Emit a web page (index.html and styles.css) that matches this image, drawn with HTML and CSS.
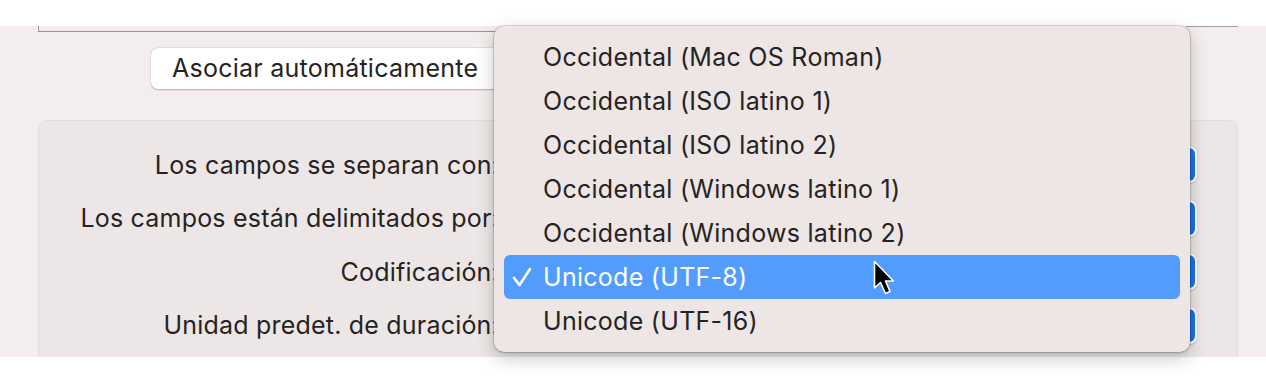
FILE: index.html
```html
<!DOCTYPE html>
<html lang="es">
<head>
<meta charset="utf-8">
<link rel="stylesheet" href="styles.css">
</head>
<body>
<div class="top-band"></div>
<div class="window">
  <div class="field-edge"><span class="field-right"></span></div>
  <div class="button-row">
    <button class="push">Asociar automáticamente</button>
  </div>
  <div class="group">
    <div class="row">
      <span class="label">Los campos se separan con:</span>
      <span class="popup"><span class="popup-arrow"></span></span>
    </div>
    <div class="row">
      <span class="label">Los campos están delimitados por:</span>
      <span class="popup"><span class="popup-arrow"></span></span>
    </div>
    <div class="row">
      <span class="label">Codificación:</span>
      <span class="popup"><span class="popup-arrow"></span></span>
    </div>
    <div class="row">
      <span class="label">Unidad predet. de duración:</span>
      <span class="popup"><span class="popup-arrow"></span></span>
    </div>
  </div>
</div>

<div class="menu">
  <div class="item">Occidental (Mac OS Roman)</div>
  <div class="item">Occidental (ISO latino 1)</div>
  <div class="item">Occidental (ISO latino 2)</div>
  <div class="item">Occidental (Windows latino 1)</div>
  <div class="item">Occidental (Windows latino 2)</div>
  <div class="item selected">
    <svg class="check" width="20" height="22" viewBox="0 0 20 22"><polyline points="2,12 7.5,19 18,3" fill="none" stroke="#fff" stroke-width="2.6" stroke-linecap="round" stroke-linejoin="round"/></svg>
    Unicode (UTF-8)
  </div>
  <div class="item">Unicode (UTF-16)</div>
</div>

<svg class="cursor" width="24" height="38" viewBox="0 0 24 38">
  <path d="M1.5 1.5 L1.5 28 L7.5 22.5 L12.5 33.5 L17 31.5 L12.5 21 L20.5 21 Z" fill="#000" stroke="#fff" stroke-width="1.6" stroke-linejoin="round"/>
</svg>
</body>
</html>
```

FILE: styles.css
```css
* { box-sizing: border-box; }
html, body {
  margin: 0;
  padding: 0;
}
body {
  width: 1266px;
  height: 390px;
  background: #ffffff;
  font-family: "Inter", "Liberation Sans", sans-serif;
  color: #262323;
  position: relative;
  overflow: hidden;
}
.top-band {
  height: 26px;
  background: #ffffff;
}
.window {
  height: 331px;
  background: #f3eeed;
  padding: 0 28px 0 38px;
  overflow: hidden;
}
.field-edge {
  height: 6px;
  border-left: 1px solid #9a9696;
  border-bottom: 1px solid #9a9696;
  position: relative;
}
.field-right {
  position: absolute;
  right: 0;
  top: 0;
  width: 52px;
  height: 7px;
  background: #f3eeed;
  border-top: 1px solid #a29e9e;
}
.button-row {
  margin-top: 16px;
  padding-left: 113px;
  height: 41px;
}
.push {
  height: 41px;
  width: 360px;
  border: none;
  border-radius: 7px;
  background: #ffffff;
  box-shadow: 0 0.5px 1.5px rgba(0,0,0,0.25), 0 0 0 0.5px rgba(0,0,0,0.06);
  font-family: inherit;
  font-size: 25px;
  letter-spacing: 0.25px;
  color: #262323;
  text-align: left;
  padding: 0 0 1px 21px;
  white-space: nowrap;
}
.group {
  margin-top: 31px;
  height: 260px;
  background: #ece7e6;
  border: 1px solid #e3dedd;
  border-radius: 9px;
  padding-top: 17px;
}
.row {
  display: grid;
  grid-template-columns: 460px 1fr;
  align-items: center;
  height: 53.5px;
}
.label {
  font-size: 25px;
  letter-spacing: 0.2px;
  text-align: right;
  white-space: nowrap;
  color: #262323;
}
.popup {
  justify-self: end;
  margin-right: 40px;
  width: 200px;
  height: 37px;
  background: #ffffff;
  border-radius: 7px;
  box-shadow: 0 0.5px 1.5px rgba(0,0,0,0.2);
  padding: 2px;
  display: flex;
  justify-content: flex-end;
}
.popup-arrow {
  width: 24px;
  height: 33px;
  border-radius: 6px;
  background: #1a73e8;
}

.menu {
  position: absolute;
  left: 494px;
  top: 26px;
  width: 696px;
  height: 326px;
  background: #ede6e4;
  border-radius: 10px;
  box-shadow: 0 0 0 0.5px rgba(0,0,0,0.22), 0 6px 18px rgba(0,0,0,0.22), 0 1px 3px rgba(0,0,0,0.15);
  padding: 9px 10px;
}
.item {
  height: 44px;
  display: flex;
  align-items: center;
  padding-left: 39px;
  font-size: 25px;
  letter-spacing: 0.28px;
  color: #262323;
  border-radius: 6px;
  position: relative;
}
.item.selected {
  background: #529cfd;
  color: #ffffff;
}
.check {
  position: absolute;
  left: 8px;
  top: 11px;
}
.cursor {
  position: absolute;
  left: 873px;
  top: 260px;
}
```
